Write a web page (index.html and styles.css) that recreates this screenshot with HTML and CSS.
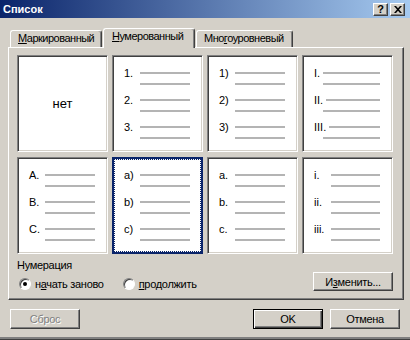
FILE: index.html
```html
<!DOCTYPE html>
<html lang="ru">
<head>
  <meta charset="UTF-8">
  <title>Список</title>
  <link rel="stylesheet" href="styles.css">
</head>
<body>
  <div class="window">
    <div class="titlebar">
      <span class="titlebar__text">Список</span>
      <div class="titlebar__buttons">
        <span class="cap-btn">?</span>
        <span class="cap-btn">
          <svg width="8" height="7" viewBox="0 0 8 7"><path d="M0 0h2l2 2.2 2-2.2h2l-3 3.5 3 3.5h-2l-2-2.2-2 2.2h-2l3-3.5z" fill="#000"/></svg>
        </span>
      </div>
    </div>

    <div class="content">
      <div class="tabs">
        <div class="tab tab--1"><u>М</u>аркированный</div>
        <div class="tab tab--2 tab--active"><u>Н</u>умерованный</div>
        <div class="tab tab--3">Мно<u>г</u>оуровневый</div>
      </div>

      <div class="panel">
        <div class="gallery">
          <div class="cell cell--none">нет</div>

          <div class="cell">
            <div class="item"><div class="item__row"><span class="item__num">1.</span><span class="item__line"></span></div><span class="item__line item__line--2"></span></div>
            <div class="item"><div class="item__row"><span class="item__num">2.</span><span class="item__line"></span></div><span class="item__line item__line--2"></span></div>
            <div class="item"><div class="item__row"><span class="item__num">3.</span><span class="item__line"></span></div><span class="item__line item__line--2"></span></div>
          </div>

          <div class="cell">
            <div class="item"><div class="item__row"><span class="item__num">1)</span><span class="item__line"></span></div><span class="item__line item__line--2"></span></div>
            <div class="item"><div class="item__row"><span class="item__num">2)</span><span class="item__line"></span></div><span class="item__line item__line--2"></span></div>
            <div class="item"><div class="item__row"><span class="item__num">3)</span><span class="item__line"></span></div><span class="item__line item__line--2"></span></div>
          </div>

          <div class="cell">
            <div class="item item--upper"><div class="item__row"><span class="item__num">I.</span><span class="item__line"></span></div><span class="item__line item__line--2"></span></div>
            <div class="item item--upper"><div class="item__row"><span class="item__num">II.</span><span class="item__line"></span></div><span class="item__line item__line--2"></span></div>
            <div class="item item--upper"><div class="item__row"><span class="item__num">III.</span><span class="item__line"></span></div><span class="item__line item__line--2"></span></div>
          </div>

          <div class="cell">
            <div class="item"><div class="item__row"><span class="item__num">A.</span><span class="item__line"></span></div><span class="item__line item__line--2"></span></div>
            <div class="item"><div class="item__row"><span class="item__num">B.</span><span class="item__line"></span></div><span class="item__line item__line--2"></span></div>
            <div class="item"><div class="item__row"><span class="item__num">C.</span><span class="item__line"></span></div><span class="item__line item__line--2"></span></div>
          </div>

          <div class="cell cell--selected">
            <div class="item"><div class="item__row"><span class="item__num">a)</span><span class="item__line"></span></div><span class="item__line item__line--2"></span></div>
            <div class="item"><div class="item__row"><span class="item__num">b)</span><span class="item__line"></span></div><span class="item__line item__line--2"></span></div>
            <div class="item"><div class="item__row"><span class="item__num">c)</span><span class="item__line"></span></div><span class="item__line item__line--2"></span></div>
          </div>

          <div class="cell">
            <div class="item"><div class="item__row"><span class="item__num">a.</span><span class="item__line"></span></div><span class="item__line item__line--2"></span></div>
            <div class="item"><div class="item__row"><span class="item__num">b.</span><span class="item__line"></span></div><span class="item__line item__line--2"></span></div>
            <div class="item"><div class="item__row"><span class="item__num">c.</span><span class="item__line"></span></div><span class="item__line item__line--2"></span></div>
          </div>

          <div class="cell">
            <div class="item item--lower"><div class="item__row"><span class="item__num">i.</span><span class="item__line"></span></div><span class="item__line item__line--2"></span></div>
            <div class="item item--lower"><div class="item__row"><span class="item__num">ii.</span><span class="item__line"></span></div><span class="item__line item__line--2"></span></div>
            <div class="item item--lower"><div class="item__row"><span class="item__num">iii.</span><span class="item__line"></span></div><span class="item__line item__line--2"></span></div>
          </div>
        </div>

        <div class="numbering">Нумерация</div>

        <div class="options">
          <div class="radios">
            <label class="radio"><span class="radio__box radio__box--checked"></span><span>н<u>а</u>чать заново</span></label>
            <label class="radio"><span class="radio__box"></span><span><u>п</u>родолжить</span></label>
          </div>
          <button class="btn btn--change">И<u>з</u>менить...</button>
        </div>
      </div>

      <div class="footer">
        <button class="btn btn--disabled">Сброс</button>
        <div class="footer__right">
          <button class="btn btn--default">OK</button>
          <button class="btn">Отмена</button>
        </div>
      </div>
    </div>
  </div>
</body>
</html>
```

FILE: styles.css
```css
*,
*::after,
*::before {
  padding: 0;
  margin: 0;
  box-sizing: border-box;
}

:root {
  --face: #d4d0c8;
  --shadow: #808080;
  --dark: #404040;
  --light: #fff;
  --navy: #0a246a;
  --sample-line: #b4b4b4;
}

body {
  width: 410px;
  height: 340px;
  background-color: var(--face);
  font-family: "Liberation Sans", Arial, sans-serif;
  font-size: 11px;
  letter-spacing: -0.3px;
  color: #000;
  overflow: hidden;
}

u {
  text-decoration: underline;
  text-underline-offset: 1px;
}

.window {
  height: 340px;
  display: flex;
  flex-direction: column;
  border-bottom: 1px solid var(--dark);
  box-shadow: inset 0 -2px 0 var(--shadow);
}

/* title bar */

.titlebar {
  height: 18px;
  flex: none;
  display: flex;
  align-items: center;
  justify-content: space-between;
  padding: 0 5px 0 3px;
  background-image: linear-gradient(to right, var(--navy), #a6caf0);
}

.titlebar__text {
  color: #fff;
  font-weight: bold;
  font-size: 11px;
  letter-spacing: 0;
}

.titlebar__buttons {
  display: flex;
  gap: 2px;
}

.cap-btn {
  width: 15px;
  height: 13px;
  display: flex;
  align-items: center;
  justify-content: center;
  background-color: var(--face);
  border: 1px solid;
  border-color: var(--light) var(--dark) var(--dark) var(--light);
  box-shadow: inset -1px -1px 0 var(--shadow);
  font-weight: bold;
  font-size: 11px;
  line-height: 11px;
  letter-spacing: 0;
}

/* tabs */

.content {
  flex: 1;
  padding: 10px 6px 0 8px;
}

.tabs {
  height: 19px;
  display: flex;
  align-items: flex-end;
  padding-left: 2px;
  letter-spacing: -0.5px;
}

.tab {
  height: 17px;
  padding-left: 7px;
  line-height: 15px;
  border: 1px solid;
  border-bottom: none;
  border-color: var(--light) var(--dark) var(--dark) var(--light);
  border-radius: 3px 3px 0 0;
  box-shadow: inset -1px 0 0 var(--shadow);
  background-color: var(--face);
  white-space: nowrap;
}

.tab--1 {
  width: 92px;
}

.tab--2 {
  width: 92px;
  margin-left: 1px;
}

.tab--3 {
  width: 97px;
  margin-left: 1px;
}

.tab--active {
  height: 20px;
  margin-bottom: -1px;
  padding-left: 8px;
  position: relative;
  z-index: 1;
}

/* tab panel */

.panel {
  width: 396px;
  height: 253px;
  padding: 7px 10px 0 8px;
  border: 1px solid;
  border-color: var(--light) var(--dark) var(--dark) var(--light);
  box-shadow: inset -1px -1px 0 var(--shadow);
}

.gallery {
  display: grid;
  grid-template-columns: repeat(4, 91px);
  grid-template-rows: repeat(2, 97px);
  column-gap: 4px;
  row-gap: 5px;
  letter-spacing: 0;
}

.cell {
  background-color: #fff;
  border: 1px solid;
  border-color: var(--shadow) var(--light) var(--light) var(--shadow);
  box-shadow: inset 1px 1px 0 var(--dark), inset -1px -1px 0 var(--face);
  padding: 11px 0 0 11px;
}

.cell--none {
  display: flex;
  align-items: center;
  justify-content: center;
  padding: 0;
  font-size: 13px;
}

.cell--selected {
  border: 1px solid var(--navy);
  box-shadow: inset 0 0 0 1px var(--navy);
  outline: 1px dotted var(--navy);
  outline-offset: -3px;
}

.item {
  width: 66px;
  height: 27px;
}

.item__row {
  height: 12px;
  display: flex;
  align-items: center;
}

.item__num {
  width: 16px;
  flex: none;
  line-height: 12px;
}

.item__line {
  flex: 1;
  height: 2px;
  background-color: var(--sample-line);
}

.item__line--2 {
  display: block;
  margin: 4px 0 0 16px;
}

.item--upper .item__num {
  width: auto;
  margin-right: 3px;
}

.item--upper .item__line--2 {
  margin-left: 9px;
}

.item--lower .item__num {
  width: 17px;
}

.item--lower .item__line--2 {
  margin-left: 17px;
}

/* numbering options */

.numbering {
  margin-top: 5px;
  line-height: 13px;
}

.options {
  display: flex;
  justify-content: space-between;
  align-items: flex-end;
}

.radios {
  height: 14px;
  display: flex;
  align-items: center;
  gap: 19px;
  padding-left: 2px;
}

.radio {
  display: flex;
  align-items: center;
  gap: 4px;
}

.radio__box {
  width: 12px;
  height: 12px;
  border-radius: 50%;
  background-color: #fff;
  border: 1px solid;
  border-color: var(--shadow) var(--light) var(--light) var(--shadow);
  box-shadow: inset 1px 1px 0 var(--dark);
  position: relative;
}

.radio__box--checked::after {
  content: "";
  position: absolute;
  left: 3px;
  top: 3px;
  width: 4px;
  height: 4px;
  border-radius: 50%;
  background-color: #000;
}

/* buttons */

.btn {
  width: 70px;
  height: 20px;
  font-family: inherit;
  font-size: 11px;
  letter-spacing: inherit;
  color: #000;
  background-color: var(--face);
  border: 1px solid;
  border-color: var(--light) var(--dark) var(--dark) var(--light);
  box-shadow: inset -1px -1px 0 var(--shadow);
}

.btn--change {
  width: 80px;
  height: 19px;
}

.btn--default {
  border: 1px solid #000;
  box-shadow: inset 1px 1px 0 var(--light), inset -1px -1px 0 var(--dark), inset -2px -2px 0 var(--shadow);
}

.btn--disabled {
  color: var(--shadow);
  text-shadow: 1px 1px 0 var(--light);
}

.footer {
  display: flex;
  justify-content: space-between;
  margin-top: 9px;
  padding: 0 4px 0 2px;
}

.footer__right {
  display: flex;
  gap: 7px;
}
```
